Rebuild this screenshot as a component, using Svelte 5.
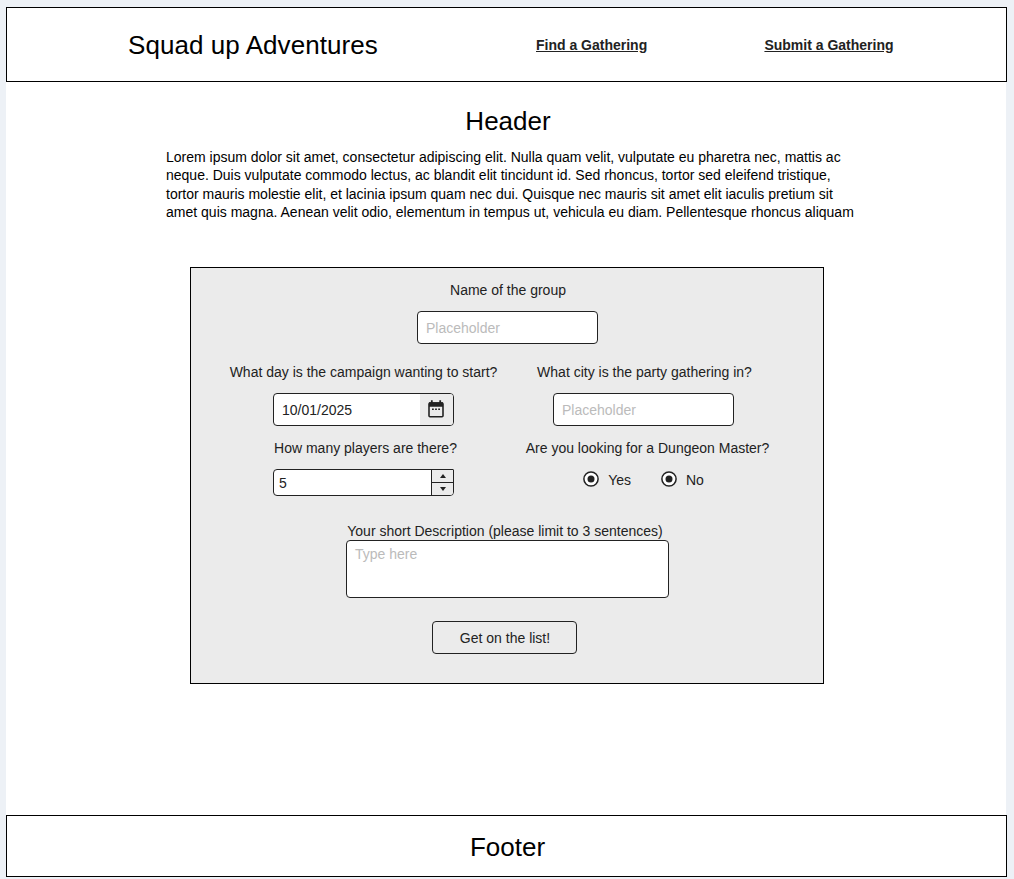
<script>
  let name = $state('');
  let date = $state('10/01/2025');
  let city = $state('');
  let players = $state(5);
  let description = $state('');
  const nav = ['Find a Gathering', 'Submit a Gathering'];
  const lines = [
    'Lorem ipsum dolor sit amet, consectetur adipiscing elit. Nulla quam velit, vulputate eu pharetra nec, mattis ac',
    'neque. Duis vulputate commodo lectus, ac blandit elit tincidunt id. Sed rhoncus, tortor sed eleifend tristique,',
    'tortor mauris molestie elit, et lacinia ipsum quam nec dui. Quisque nec mauris sit amet elit iaculis pretium sit',
    'amet quis magna. Aenean velit odio, elementum in tempus ut, vehicula eu diam. Pellentesque rhoncus aliquam'
  ];
</script>

{#snippet radio(label)}
  <span class="radio">
    <svg width="16" height="16" viewBox="0 0 16 16">
      <circle cx="8" cy="8" r="7.1" fill="#fff" stroke="#222" stroke-width="1.5" />
      <circle cx="8" cy="8" r="3.5" fill="#222" />
    </svg>
    <span>{label}</span>
  </span>
{/snippet}

<div class="page">
  <header class="bar top">
    <div class="brand">Squad up Adventures</div>
    <nav>
      {#each nav as item}<a href="#top">{item}</a>{/each}
    </nav>
  </header>

  <main>
    <h1>Header</h1>
    <p class="intro">
      {#each lines as line}<span>{line}</span>{/each}
    </p>

    <form>
      <label class="group-label" for="name">Name of the group</label>
      <input id="name" class="field" placeholder="Placeholder" bind:value={name} />

      <div class="grid">
        <div class="cell">
          <label for="date">What day is the campaign wanting to start?</label>
          <div class="field date">
            <input id="date" bind:value={date} />
            <span class="cal">
              <svg width="16" height="18" viewBox="0 0 16 18">
                <path d="M3.8 0.2v3M12.2 0.2v3" stroke="#222" stroke-width="1.8" />
                <rect x="1" y="3" width="14" height="13.8" rx="1" fill="none" stroke="#222" stroke-width="1.6" />
                <path d="M1 2.200h14v4.600H1z" fill="#222" />
                <path d="M4 8.500h1.800v1.600H4zM7.100 8.500h1.800v1.600H7.100zM10.200 8.500h1.800v1.600h-1.800z" fill="#222" />
              </svg>
            </span>
          </div>
        </div>
        <div class="cell">
          <label class="city" for="city">What city is the party gathering in?</label>
          <input id="city" class="field" placeholder="Placeholder" bind:value={city} />
        </div>
        <div class="cell">
          <label class="players" for="players">How many players are there?</label>
          <div class="field number">
            <input id="players" bind:value={players} />
            <span class="steps">
              <span><svg width="6" height="4" viewBox="0 0 6 4"><path d="M3 0l3 4H0z" fill="#222" /></svg></span>
              <span><svg width="6" height="4" viewBox="0 0 6 4"><path d="M0 0h6L3 4z" fill="#222" /></svg></span>
            </span>
          </div>
        </div>
        <div class="cell">
          <span class="label master">Are you looking for a Dungeon Master?</span>
          <div class="radios">
            {@render radio('Yes')}
            {@render radio('No')}
          </div>
        </div>
      </div>

      <label class="desc-label" for="desc">Your short Description (please limit to 3 sentences)</label>
      <textarea id="desc" placeholder="Type here" bind:value={description}></textarea>
      <button type="button">Get on the list!</button>
    </form>
  </main>

  <footer class="bar bottom">Footer</footer>
</div>

<style>
  :global(body) {
    background: #edf1f6;
    overflow: hidden;
  }
  .page, .page * { box-sizing: border-box; }
  .page {
    height: 879px;
    padding: 7px 7px 2px 6px;
    display: flex;
    flex-direction: column;
    font: 14px/18px "Liberation Sans", Arial, sans-serif;
    color: #222;
  }
  .bar {
    border: 1px solid #000;
    background: #fff;
    color: #000;
    font-size: 26px;
    line-height: 30px;
    display: flex;
    align-items: center;
    flex: none;
  }
  .top { height: 75px; padding-left: 121px; }
  .brand { width: 408px; white-space: nowrap; letter-spacing: 0.06px; }
  nav { display: flex; gap: 117.2px; }
  nav a { font-size: 14px; line-height: 18px; font-weight: bold; color: #222; white-space: nowrap; }
  .bottom { height: 62px; justify-content: center; padding: 2px 0 0 2px; }
  main {
    flex: 1;
    margin-right: 1px;
    background: #fff;
    padding-top: 24px;
  }
  h1 {
    margin: 0;
    padding-left: 4px;
    font-size: 26px;
    line-height: 30px;
    font-weight: normal;
    color: #000;
    text-align: center;
  }
  .intro { margin: 12px 0 0 160px; line-height: 18.4px; color: #000; }
  .intro span { display: block; white-space: nowrap; }
  .intro span:last-child { letter-spacing: 0.006px; }
  form {
    width: 634px;
    height: 417px;
    margin: 45.4px 0 0 184px;
    border: 1px solid #000;
    background: #ebebeb;
    display: flex;
    flex-direction: column;
    align-items: center;
    padding-top: 13px;
  }
  label, .label { display: block; height: 18px; white-space: nowrap; }
  .group-label { padding-left: 2px; }
  input, textarea, button { font: inherit; color: #222; margin: 0; outline: none; }
  .field {
    width: 181px;
    height: 33px;
    border: 1px solid #222;
    border-radius: 4px;
    background: #fff;
    padding: 1px 8px 0;
  }
  #name { margin: 12px 0 0 1px; }
  .field input { border: 0; background: none; min-width: 0; flex: 1; height: 100%; }
  ::placeholder { color: #bbb; opacity: 1; }
  .grid {
    display: grid;
    grid-template-columns: 281px 279px;
    grid-template-rows: 76px 83px;
    margin-top: 19px;
    margin-right: 8px;
  }
  .cell { display: flex; flex-direction: column; align-items: center; }
  .cell .field { margin-top: 12px; }
  .city { padding-left: 2px; }
  .players { padding-left: 4px; }
  .master { padding-left: 8px; }
  .date { display: flex; padding: 0; overflow: hidden; }
  .date input { padding: 1px 8px 0; }
  .cal { width: 33px; background: #ebebeb; display: flex; justify-content: center; padding: 6px 1px 0 0; }
  .number { height: 27px; display: flex; padding: 0; overflow: hidden; border-top-right-radius: 1px; }
  .number input { padding: 1px 5px 0; }
  .steps { width: 22px; border-left: 1px solid #222; background: #ebebeb; display: grid; grid-template-rows: 13px 12px; }
  .steps span { display: flex; align-items: center; justify-content: center; }
  .steps span:first-child { border-bottom: 1px solid #222; }
  .radios { display: flex; gap: 30px; margin: 13px 0 0 0; }
  .radio { display: flex; gap: 9px; line-height: 20px; }
  .radio svg { margin-top: 1px; }
  .desc-label { padding-right: 4px; }
  textarea {
    width: 323px;
    height: 58px;
    margin-left: 1px;
    border: 1px solid #222;
    border-radius: 4px;
    background: #fff;
    padding: 4px 8px;
    resize: none;
    flex: none;
  }
  button {
    width: 145px;
    height: 33px;
    margin: 23px 5px 0 0;
    border: 1px solid #222;
    border-radius: 4px;
    background: none;
    padding: 1px 0 0 1px;
  }
</style>
